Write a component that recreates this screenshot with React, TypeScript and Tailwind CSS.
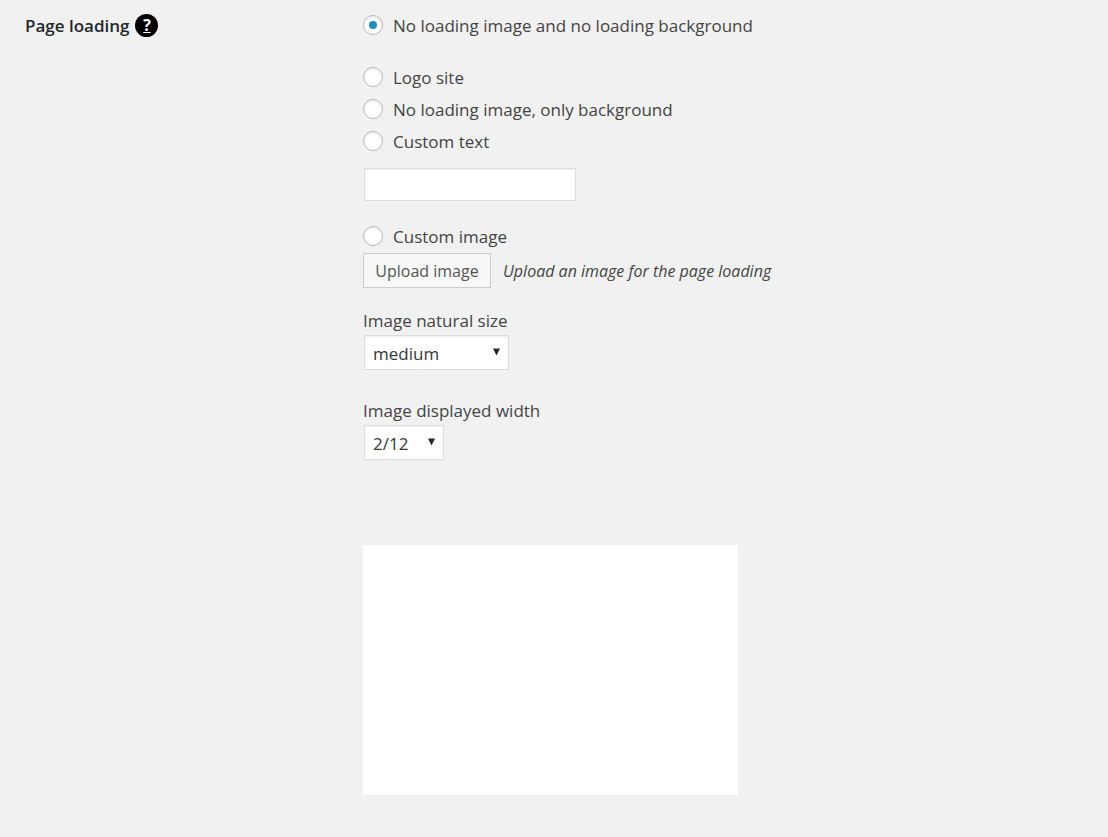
import { useState } from "react";

const fieldShadow = "border border-[#ddd] bg-white shadow-[inset_0_1px_2px_rgba(0,0,0,0.07)]";

type RadioRowProps = {
  value: string;
  label: string;
  selected: string;
  onSelect: (value: string) => void;
};

function RadioRow({ value, label, selected, onSelect }: RadioRowProps) {
  return (
    <label className="flex h-8 w-fit items-center gap-[10px]">
      <input
        type="radio"
        name="page-loading"
        value={value}
        checked={selected === value}
        onChange={() => onSelect(value)}
        className="grid size-5 shrink-0 appearance-none place-items-center rounded-full border border-[#b4b9be] bg-white shadow-[inset_0_1px_2px_rgba(0,0,0,0.1)] before:size-2 before:rounded-full checked:before:bg-[#1e8cbe]"
      />
      <span className="pt-[2px]">{label}</span>
    </label>
  );
}

type SelectFieldProps = {
  id: string;
  label: string;
  options: string[];
  defaultValue: string;
  width: string;
};

function SelectField({ id, label, options, defaultValue, width }: SelectFieldProps) {
  return (
    <div>
      <label htmlFor={id} className="block h-7 leading-7">
        {label}
      </label>
      <div className={`relative ml-px ${width}`}>
        <select
          id={id}
          defaultValue={defaultValue}
          className={`block h-[35px] w-full appearance-none pt-[2px] pl-2 text-[#32373c] ${fieldShadow}`}
        >
          {options.map((option) => (
            <option key={option}>{option}</option>
          ))}
        </select>
        <svg
          viewBox="0 0 8 8"
          className="pointer-events-none absolute top-[13px] right-2 size-2 fill-[#23282d]"
          aria-hidden="true"
        >
          <path d="M0 .5h7L3.500 7.500z" />
        </svg>
      </div>
    </div>
  );
}

export default function App() {
  const [loading, setLoading] = useState("none");

  return (
    <main className="flex min-h-screen bg-[#f1f1f1] pt-[9px] pr-[25px] pb-10 pl-[25px] font-['Open_Sans',sans-serif] text-[17px] text-[#444]">
      {/* Setting name */}
      <div className="flex h-8 w-[338px] shrink-0 items-center gap-[6px]">
        <h2 className="pt-[2px] text-[17px] font-semibold text-[#23282d]">Page loading</h2>
        <button
          type="button"
          aria-label="Help"
          className="size-[23px] rounded-full bg-black text-[16px] leading-[22px] font-bold text-white underline"
        >
          ?
        </button>
      </div>

      {/* Options */}
      <div className="min-w-0 flex-1">
        <RadioRow
          value="none"
          label="No loading image and no loading background"
          selected={loading}
          onSelect={setLoading}
        />

        <div className="mt-5">
          <RadioRow value="logo" label="Logo site" selected={loading} onSelect={setLoading} />
          <RadioRow
            value="background"
            label="No loading image, only background"
            selected={loading}
            onSelect={setLoading}
          />
          <RadioRow value="text" label="Custom text" selected={loading} onSelect={setLoading} />
        </div>

        <input
          type="text"
          aria-label="Custom text"
          className={`mt-[11px] ml-px block h-[33px] w-[212px] px-2 ${fieldShadow}`}
        />

        <div className="mt-[19px]">
          <RadioRow value="image" label="Custom image" selected={loading} onSelect={setLoading} />
          <div className="mt-px flex items-center gap-3">
            <button
              type="button"
              className="h-[35px] w-32 border border-[#ccc] bg-[#f7f7f7] text-[16px] text-[#555]"
            >
              Upload image
            </button>
            <p className="text-[16px] italic">Upload an image for the page loading</p>
          </div>
        </div>

        <div className="mt-[19px] flex flex-col gap-[27px]">
          <SelectField
            id="natural-size"
            label="Image natural size"
            options={["thumbnail", "medium", "large", "full"]}
            defaultValue="medium"
            width="w-[145px]"
          />
          <SelectField
            id="displayed-width"
            label="Image displayed width"
            options={["1/12", "2/12", "3/12", "4/12", "6/12", "12/12"]}
            defaultValue="2/12"
            width="w-20"
          />
        </div>

        {/* Preview */}
        <div className="mt-[85px] h-[250px] max-w-[375px] bg-white" />
      </div>
    </main>
  );
}
